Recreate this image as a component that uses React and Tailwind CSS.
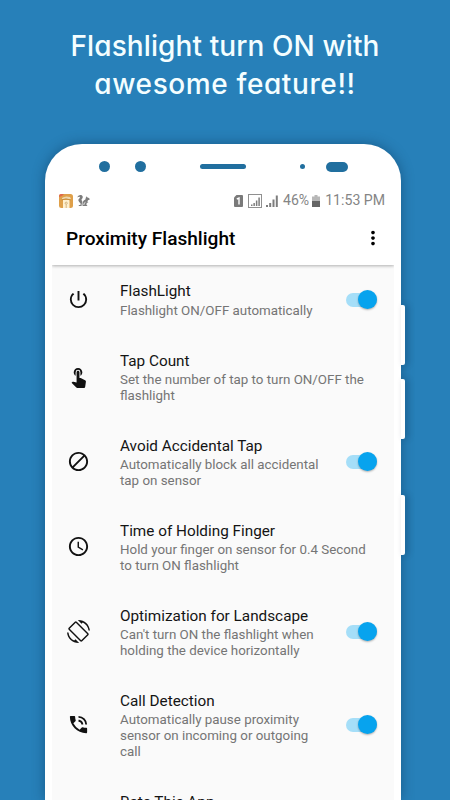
import React from "react";
import {
  MdPowerSettingsNew,
  MdTouchApp,
  MdBlock,
  MdAccessTime,
  MdScreenRotation,
  MdPhoneInTalk,
  MdMoreVert,
} from "react-icons/md";

const rows = [
  { icon: MdPowerSettingsNew, title: "FlashLight", lines: ["Flashlight ON/OFF automatically"], on: true, h: "h-[69px]" },
  { icon: MdTouchApp, title: "Tap Count", lines: ["Set the number of tap to turn ON/OFF the", "flashlight"], h: "h-[85px]" },
  { icon: MdBlock, title: "Avoid Accidental Tap", lines: ["Automatically block all accidental", "tap on sensor"], on: true, h: "h-[85px]" },
  { icon: MdAccessTime, title: "Time of Holding Finger", lines: ["Hold your finger on sensor for 0.4 Second", "to turn ON flashlight"], h: "h-[85px]" },
  { icon: MdScreenRotation, title: "Optimization for Landscape", lines: ["Can't turn ON the flashlight when", "holding the device horizontally"], on: true, h: "h-[85px]" },
  { icon: MdPhoneInTalk, title: "Call Detection", lines: ["Automatically pause proximity", "sensor on incoming or outgoing", "call"], on: true, h: "h-[101px]" },
  { title: "Rate This App", lines: ["Rate this app"], h: "h-[70px]" },
];

function Toggle() {
  return (
    <div className="mr-[17.5px] flex h-[14px] w-[31px] shrink-0 items-center justify-end rounded-full bg-[#a5def8]">
      <div className="h-[19px] w-[19px] shrink-0 rounded-full bg-[#07a3ee] shadow-[0_1px_2px_rgba(0,0,0,0.3)]" />
    </div>
  );
}

function Row({ icon: Icon, title, lines, on, h }) {
  return (
    <div className={`flex shrink-0 items-center ${h}`}>
      <div className="flex w-[68px] shrink-0 pl-[14.5px]">
        {Icon && <Icon className="size-[23px] text-[#111]" />}
      </div>
      <div className="min-w-0 flex-1 pt-px whitespace-nowrap">
        <div className="text-[15.3px] leading-[21.5px] text-[#141414]">{title}</div>
        {lines.map((l) => (
          <div key={l} className="text-[13.35px] leading-[15.6px] text-[#757575]">{l}</div>
        ))}
      </div>
      {on && <Toggle />}
    </div>
  );
}

function Signal({ className }) {
  return (
    <svg viewBox="0 0 12 12" className={className} fill="#7d7d7d">
      <path d="M0 10h2v2H0zM3.2 8h2v4h-2zM6.5 4.5h2V12h-2zM9.8 0.5h2V12h-2z" />
    </svg>
  );
}

function StatusBar() {
  return (
    <div className="flex h-[25px] shrink-0 items-center pl-[7px] pr-[9px] text-[#858585]">
      <svg viewBox="0 0 14 14" className="size-[14px]">
        <rect width="14" height="14" rx="2.5" fill="#dfa04a" />
        <path d="M0 3V2Q0 0 2 0h3L3 2z" fill="#df694a" />
        <path d="M3 4Q6 1.5 11 3l1 2H3z" fill="#eed7ad" />
        <path d="M4 6h6.5v8H4z" fill="#fff0cf" />
        <path d="M2.5 6Q7 3.5 11.5 6" stroke="#c08a3c" strokeWidth=".8" fill="none" />
        <circle cx="7.2" cy="9.2" r="1.1" fill="none" stroke="#c9a870" strokeWidth=".8" />
        <path d="M7.2 10.5V14" stroke="#c9a870" strokeWidth=".8" />
      </svg>
      <svg viewBox="0 0 13 13" className="ml-[4px] size-[13px]" fill="#7c7c7c">
        <path d="M0.4 3.6C0.6 0.8 4.6 0 5.6 2.2C6.4 4.4 3.8 5 4.8 6.4C5.6 7.4 5.4 9 4.7 10L4.6 12H2L1.6 11H3.4C4.4 9 1.8 8.4 1.4 6.6C1 4.8 3.6 4.2 2.8 3C2.2 2.3 1.2 2.7 0.4 3.6z" />
        <path d="M5.6 12C5 9 5.8 6.4 8.4 5.6L8.8 3.8L9.8 2.2L10.4 3.4C11.8 3.4 12.8 4.4 12.8 5.4L11 6.2L10.4 7.4L11.4 8.4L9.8 8.8L9.4 10.8L10.6 12z" />
        <path d="M6.8 11Q6.8 8.6 8.5 8.2" fill="none" stroke="#fff" strokeWidth=".8" />
      </svg>
      <div className="ml-auto flex items-center">
        <svg viewBox="0 0 9 12" className="h-[12px] w-[9px]">
          <path d="M2.5 0H8q1 0 1 1v10q0 1-1 1H1q-1 0-1-1V2.5z" fill="#7a7a7a" />
          <path d="M2.8 4l2.2-1v6.5" stroke="#fff" strokeWidth="1.4" fill="none" />
        </svg>
        <div className="ml-[5px] flex size-[14px] items-end justify-center border border-[#909090] pb-px">
          <Signal className="size-[9px]" />
        </div>
        <Signal className="ml-[4px] size-[12px]" />
        <span className="ml-[5px] text-[14.1px] leading-none">46%</span>
        <svg viewBox="0 0 8 12" className="ml-[3px] h-[12px] w-[8px]">
          <path d="M2.5 0h3v1.5H8V6H0V1.5h2.5z" fill="#b7b7b7" />
          <path d="M0 6h8v6H0z" fill="#656565" />
        </svg>
        <span className="ml-[5px] text-[14.1px] leading-none">11:53 PM</span>
      </div>
    </div>
  );
}

export default function App() {
  return (
    <div className="flex h-[800px] w-[450px] flex-col overflow-hidden bg-[#2780b9] font-[Roboto,sans-serif]">
      <h1 className="flex h-[144px] shrink-0 flex-col items-center pt-[27px] font-[Inter,sans-serif] text-[28px] leading-[38px] font-medium whitespace-nowrap text-[#f4feff] [font-feature-settings:'cv11']">
        <span className="tracking-[0.1px]">Flashlight turn ON with</span>
        <span className="tracking-[0.6px]">awesome feature!!</span>
      </h1>
      <div className="flex flex-1 items-start pl-[45px]">
        <div className="flex h-[656px] w-[356px] flex-col rounded-t-[37px] bg-white shadow-[0_0_13px_rgba(0,35,65,0.4)]">
          <div className="flex h-[44px] shrink-0 items-center pt-px pl-[54px]">
            <i className="size-[11px] rounded-full bg-[#216f9f]" />
            <i className="ml-[25px] size-[11px] rounded-full bg-[#216f9f]" />
            <i className="ml-[54px] h-[5px] w-[46px] rounded-full bg-[#216f9f]" />
            <i className="ml-[54px] size-[5px] rounded-full bg-[#216f9f]" />
            <i className="ml-[21px] h-[10px] w-[22px] rounded-full bg-[#216f9f]" />
          </div>
          <div className="mx-[7px] flex h-[612px] flex-col overflow-hidden bg-[#fafafa]">
            <div className="flex h-[77px] shrink-0 flex-col bg-white shadow-[0_1px_3px_rgba(0,0,0,0.3)]">
              <StatusBar />
              <div className="flex flex-1 items-center justify-between pr-[10px] pl-[14px]">
                <span className="text-[19.1px] font-medium text-black">Proximity Flashlight</span>
                <MdMoreVert className="mb-[2px] size-[22px] text-black" />
              </div>
            </div>
            {rows.map((r) => (
              <Row key={r.title} {...r} />
            ))}
          </div>
        </div>
        <div className="z-10 flex flex-col pt-[161px]">
          <i className="h-[60px] w-[4px] rounded-r-[2px] bg-white shadow-[3px_0_6px_rgba(0,35,65,0.3)]" />
          <i className="mt-[14px] h-[60px] w-[4px] rounded-r-[2px] bg-white shadow-[3px_0_6px_rgba(0,35,65,0.3)]" />
          <i className="mt-[56px] h-[60px] w-[4px] rounded-r-[2px] bg-white shadow-[3px_0_6px_rgba(0,35,65,0.3)]" />
        </div>
      </div>
    </div>
  );
}
